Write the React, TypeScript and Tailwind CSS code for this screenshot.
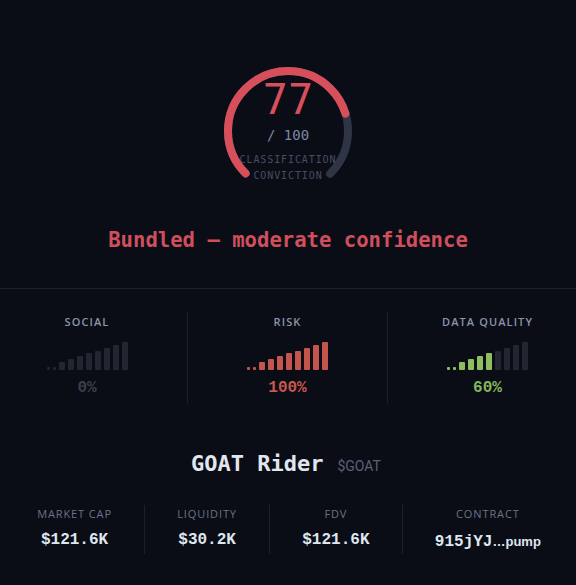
import React from "react";

type Meter = {
  label: string;
  value: number;
  color: string;
  text: string;
};

const meters: Meter[] = [
  { label: "SOCIAL", value: 0, color: "bg-[#c4554d]", text: "text-[#3a3f4d]" },
  { label: "RISK", value: 100, color: "bg-[#c4554d]", text: "text-[#c9574f]" },
  { label: "DATA QUALITY", value: 60, color: "bg-[#8cbd5f]", text: "text-[#84b55a]" },
];

const barHeights = [3, 3, 8, 11, 14, 17, 19, 22, 25, 28];

const stats = [
  { label: "MARKET CAP", value: "$121.6K" },
  { label: "LIQUIDITY", value: "$30.2K" },
  { label: "FDV", value: "$121.6K" },
];

const mono = "font-['DejaVu_Sans_Mono',monospace]";
const codeFont = "font-['Liberation_Mono',monospace]";
const sans = "font-['Open_Sans','Noto_Sans',sans-serif]";

// 270deg arc, starting bottom-left going clockwise
const Gauge: React.FC<{ score: number }> = ({ score }) => {
  const r = 60;
  const c = 2 * Math.PI * r;
  const sweep = c * 0.75;
  const filled = sweep * (score / 100);
  return (
    <div className="relative w-[128px] h-[128px]">
      <svg width="128" height="128" viewBox="0 0 128 128" className="absolute inset-0 overflow-visible">
        <circle
          cx="64"
          cy="64"
          r={r}
          fill="none"
          stroke="#2f3545"
          strokeWidth="8"
          strokeLinecap="round"
          strokeDasharray={`${sweep} ${c}`}
          transform="rotate(135 64 64)"
        />
        <circle
          cx="64"
          cy="64"
          r={r}
          fill="none"
          stroke="#d84f5c"
          strokeWidth="8"
          strokeLinecap="round"
          strokeDasharray={`${filled} ${c}`}
          transform="rotate(135 64 64)"
        />
      </svg>
      <div className="absolute inset-x-[-20px] top-0 flex flex-col items-center">
        <div className={`${mono} mt-[12px] text-[42px] leading-[42px] text-[#d84f5c]`}>{score}</div>
        <div className={`${mono} mt-[4px] text-[14px] leading-[20px] text-[#7c87a3]`}>/ 100</div>
        <div className={`${mono} mt-[7px] text-[10px] leading-[16px] tracking-[0.09em] text-[#474e63]`}>
          CLASSIFICATION
        </div>
        <div className={`${mono} text-[10px] leading-[16px] tracking-[0.09em] text-[#474e63]`}>CONVICTION</div>
      </div>
    </div>
  );
};

const Bars: React.FC<{ value: number; color: string }> = ({ value, color }) => {
  const lit = Math.round((value / 100) * barHeights.length);
  return (
    <div className="flex items-end h-[28px]">
      {barHeights.map((h, i) => (
        <div
          key={i}
          className={`${i < 2 ? "w-[3px] mr-[3px]" : "w-[6px] mr-[3px]"} last:mr-0 rounded-[1px] ${
            i < lit ? color : "bg-[#232530]"
          }`}
          style={{ height: h }}
        />
      ))}
    </div>
  );
};

export default function App() {
  return (
    <div className="w-full min-h-screen bg-[#0a0d16] overflow-hidden">
      <div className="flex flex-col items-center pt-[67px] pb-[34px] border-b border-[#1b202b]">
        <Gauge score={77} />
        <div className={`${mono} mt-[31px] text-[20.6px] leading-[28px] font-bold text-[#d14f5c]`}>
          Bundled — moderate confidence
        </div>
      </div>

      <div className="flex justify-center pt-[23px] -ml-[2px]">
        {meters.map((m, i) => (
          <div
            key={m.label}
            className={`w-[200px] shrink-0 flex flex-col items-center pt-[2px] pb-[5px] ${
              i > 0 ? "border-l border-[#1b202b]" : ""
            }`}
          >
            <div className={`${sans} text-[11px] leading-[16px] font-semibold tracking-[0.1em] text-[#8b94aa]`}>
              {m.label}
            </div>
            <div className="mt-[12px]">
              <Bars value={m.value} color={m.color} />
            </div>
            <div className={`${codeFont} mt-[8px] text-[16px] leading-[20px] font-bold ${m.text}`}>{m.value}%</div>
          </div>
        ))}
      </div>

      <div className="flex items-baseline justify-center gap-[14px] mt-[47px] -ml-[4px]">
        <span className={`${mono} text-[22px] leading-[28px] font-bold text-[#e2e7ef]`}>GOAT Rider</span>
        <span className="font-['Roboto',sans-serif] text-[14px] text-[#5a6176]">$GOAT</span>
      </div>

      <div className="flex pl-[5px] pr-[3px] mt-[27px]">
        {stats.map((s) => (
          <div key={s.label} className="flex-auto flex flex-col items-center pt-[1px] pb-[2px] border-r border-[#1b202b]">
            <div className={`${sans} text-[11px] leading-[16px] tracking-[0.08em] text-[#6a7285]`}>{s.label}</div>
            <div className={`${codeFont} mt-[8px] text-[16px] leading-[20px] font-bold text-[#dfe6ee]`}>{s.value}</div>
          </div>
        ))}
        <div className="flex-auto flex flex-col items-center pt-[1px] pb-[2px]">
          <div className={`${sans} text-[11px] leading-[16px] tracking-[0.08em] text-[#6a7285]`}>CONTRACT</div>
          <div className="mt-[8px] text-[16px] leading-[20px] font-bold text-[#dfe6ee]">
            <span className={codeFont}>915jYJ</span>
            <span className="font-['Liberation_Sans',sans-serif] text-[13px]">…pump</span>
          </div>
        </div>
      </div>
    </div>
  );
}
